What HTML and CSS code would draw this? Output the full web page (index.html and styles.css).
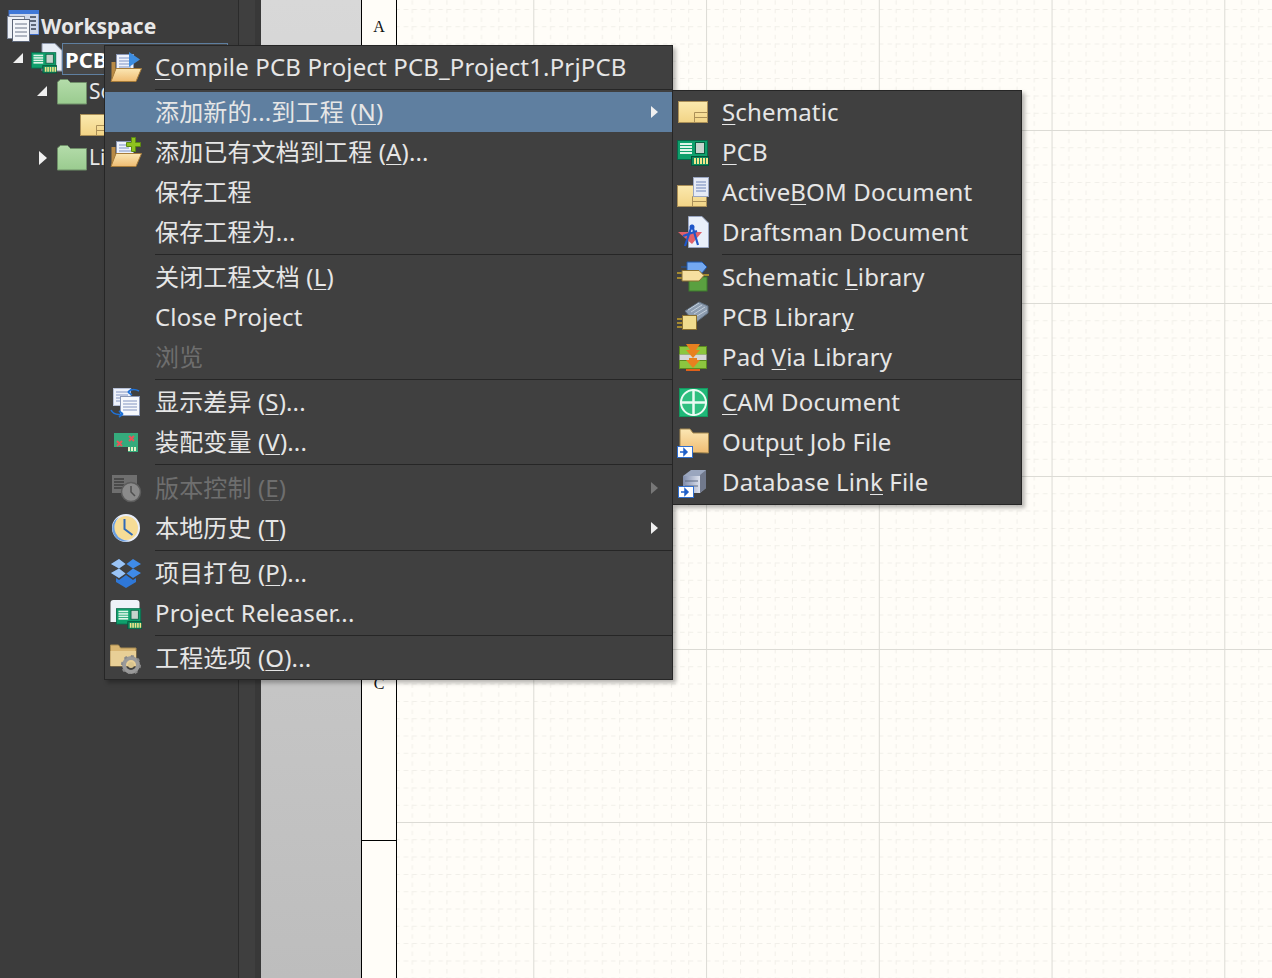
FILE: index.html
```html
<!DOCTYPE html>
<html lang="zh">
<head>
  <meta charset="UTF-8">
  <title>Workspace</title>
  <link rel="stylesheet" href="styles.css">
</head>
<body>
  <svg class="icon-defs" xmlns="http://www.w3.org/2000/svg">
    <defs>
      <linearGradient id="gFolder" x1="0" y1="0" x2="0" y2="1"><stop offset="0" stop-color="#fbe7b4"/><stop offset="1" stop-color="#efbc72"/></linearGradient>
      <linearGradient id="gSheet" x1="0" y1="0" x2="0" y2="1"><stop offset="0" stop-color="#fbe9ae"/><stop offset="1" stop-color="#f2d486"/></linearGradient>
      <linearGradient id="gGreen" x1="0" y1="0" x2="0" y2="1"><stop offset="0" stop-color="#b4dcaa"/><stop offset="1" stop-color="#9acb8f"/></linearGradient>
      <linearGradient id="gGrey" x1="0" y1="0" x2="1" y2="0"><stop offset="0" stop-color="#7f8cab"/><stop offset="1" stop-color="#dde2ee"/></linearGradient>
      <symbol id="i-pcb" viewBox="0 0 32 32">
        <rect x="0.500" y="4.500" width="30" height="19" fill="#0fa06c" stroke="#07694a"/>
        <rect x="3" y="7" width="12" height="2" fill="#dff5e8"/><rect x="3" y="10" width="12" height="2" fill="#dff5e8"/>
        <rect x="3" y="13" width="12" height="2" fill="#dff5e8"/><rect x="3" y="16" width="12" height="2" fill="#dff5e8"/>
        <rect x="18.500" y="6.500" width="9" height="11" fill="#c6d3cd" stroke="#0a5d42"/>
        <rect x="14.500" y="20.500" width="17" height="9" fill="#0e8a5e" stroke="#07503a"/>
        <path d="M18 22v6M21 22v6M24 22v6M27 22v6M30 22v6" stroke="#f0e58a" stroke-width="2"/>
      </symbol>
      <symbol id="i-sheet" viewBox="0 0 32 32">
        <rect x="1.500" y="5.500" width="29" height="21" fill="url(#gSheet)" stroke="#ab9058"/>
        <path d="M17.500 26V16.500H30M17.500 21.500H30" fill="none" stroke="#ab9058"/>
      </symbol>
      <symbol id="i-badge" viewBox="0 0 32 32">
        <rect x="0.500" y="20.500" width="15" height="11" fill="#fff" stroke="#2f6fd0"/>
        <path d="M3 26h6M7 23l3 3-3 3z" fill="#1f5fc8" stroke="#1f5fc8" stroke-width="1.500"/>
      </symbol>
    </defs>
  </svg>

  <div class="app">
    <aside class="tree-panel">
      <div class="tree-root">
        <svg class="tree-icon" viewBox="0 0 32 32">
          <rect x="2" y="0.500" width="30" height="24" fill="#cfd8ea" stroke="#3f6cc8"/>
          <rect x="2" y="0" width="30" height="4" fill="#3f78d8"/>
          <rect x="0.500" y="6.500" width="17" height="22" fill="#eef1f6" stroke="#7f8798"/>
          <rect x="5.500" y="9.500" width="17" height="22" fill="#f5f7fb" stroke="#5d6678"/>
          <path d="M8 14h12M8 18h12M8 22h12M8 26h12" stroke="#6b7488"/>
          <path d="M23 7h6M23 11h6M24 15h5M24 19h5" stroke="#5d6678" stroke-width="2"/>
        </svg>
        <span>Workspace</span>
      </div>

      <div class="tree-row level-0">
        <span class="arrow-open"></span>
        <svg class="tree-icon project-icon" viewBox="0 0 32 32">
          <path d="M11 0.500h13l7 7V28H11z" fill="#e8edf6" stroke="#8f99ad"/>
          <use href="#i-pcb" x="0" y="6" width="26" height="26"/>
        </svg>
        <span class="tree-label selected">PCB_Project1.PrjPCB</span>
      </div>
      <div class="tree-row level-1">
        <span class="arrow-open"></span>
        <svg class="tree-icon" viewBox="0 0 30 26"><path d="M0.500 25V3l3-2.500h7l3 3H29.500V25z" fill="url(#gGreen)" stroke="#6f8f69"/></svg>
        <span class="tree-label plain">Source Documents</span>
      </div>
      <div class="tree-row level-2">
        <svg class="tree-icon" viewBox="0 0 32 32"><use href="#i-sheet"/></svg>
        <span class="tree-label plain">Sheet1.SchDoc</span>
      </div>
      <div class="tree-row level-1">
        <span class="arrow-closed"></span>
        <svg class="tree-icon" viewBox="0 0 30 26"><path d="M0.500 25V3l3-2.500h7l3 3H29.500V25z" fill="url(#gGreen)" stroke="#6f8f69"/></svg>
        <span class="tree-label plain">Libraries</span>
      </div>
    </aside>
    <div class="panel-strip"></div>
    <div class="desk"></div>
    <div class="sheet-zones">
      <div class="zone zone-a">A</div>
      <div class="zone zone-b">B</div>
      <div class="zone zone-c">C</div>
    </div>
    <svg class="sheet-grid" xmlns="http://www.w3.org/2000/svg">
      <defs>
        <pattern id="grid" x="136.300" y="130" width="172.750" height="173" patternUnits="userSpaceOnUse">
          <g stroke="#f1efe9" stroke-dasharray="4.500 4.140" fill="none">
            <path d="M17.270 0V173M34.550 0V173M51.820 0V173M69.100 0V173M86.370 0V173M103.650 0V173M120.920 0V173M138.200 0V173M155.470 0V173"/>
            <path d="M0 17.800H173M0 35.100H173M0 52.400H173M0 69.700H173M0 87H173M0 104.300H173M0 121.600H173M0 138.900H173M0 156.200H173"/>
          </g>
          <path d="M0.500 0V173M0 0.500H173" stroke="#dcdbd5" fill="none"/>
        </pattern>
      </defs>
      <rect width="100%" height="100%" fill="url(#grid)"/>
    </svg>

    <div class="menu menu-main">
      <div class="menu-item">
        <svg class="menu-icon" viewBox="0 0 32 32">
          <path d="M1.500 29V11h4v18z" fill="#b98a45"/>
          <rect x="6.500" y="3.500" width="17" height="17" fill="#eef2fb" stroke="#8a97b5"/>
          <path d="M9 7h12M9 10h12M9 13h12M9 16h12" stroke="#7f93c4"/>
          <path d="M19 1v15l11-7.500z" fill="#3d8de0"/>
          <path d="M1 30.500 6 17.500H31.500L26 30.500z" fill="url(#gFolder)" stroke="#a77c3a"/>
        </svg>
        <span class="menu-text"><u>C</u>ompile PCB Project PCB_Project1.PrjPCB</span>
      </div>
      <div class="menu-sep"></div>
      <div class="menu-item active">
        <span class="menu-icon"></span>
        <span class="menu-text">添加新的...到工程 (<u>N</u>)</span>
        <span class="submenu-arrow"></span>
      </div>
      <div class="menu-item">
        <svg class="menu-icon" viewBox="0 0 32 32">
          <path d="M1.500 29V11h4v18z" fill="#b98a45"/>
          <rect x="6.500" y="5.500" width="17" height="15" fill="#eef2fb" stroke="#8a97b5"/>
          <path d="M9 9h10M9 12h10M9 15h12" stroke="#7f93c4"/>
          <path d="M1 30.500 6 17.500H31.500L26 30.500z" fill="url(#gFolder)" stroke="#a77c3a"/>
          <path d="M21.500 1.500h4v5h5v4h-5v5h-4v-5h-5v-4h5z" fill="#8fc31f" stroke="#5c8a12"/>
        </svg>
        <span class="menu-text">添加已有文档到工程 (<u>A</u>)...</span>
      </div>
      <div class="menu-item"><span class="menu-icon"></span><span class="menu-text">保存工程</span></div>
      <div class="menu-item"><span class="menu-icon"></span><span class="menu-text">保存工程为...</span></div>
      <div class="menu-sep"></div>
      <div class="menu-item"><span class="menu-icon"></span><span class="menu-text">关闭工程文档 (<u>L</u>)</span></div>
      <div class="menu-item"><span class="menu-icon"></span><span class="menu-text">Close Project</span></div>
      <div class="menu-item disabled"><span class="menu-icon"></span><span class="menu-text">浏览</span></div>
      <div class="menu-sep"></div>
      <div class="menu-item">
        <svg class="menu-icon" viewBox="0 0 32 32">
          <rect x="3.500" y="2.500" width="17" height="17" fill="#eef2fb" stroke="#b6c0d6"/>
          <path d="M6 6h12M6 9h12M6 12h12M6 15h12" stroke="#8294c0"/>
          <rect x="10.500" y="10.500" width="19" height="19" fill="#f6f8fc" stroke="#8a97b5"/>
          <path d="M13 15h14M13 18h14M13 21h14M13 24h14" stroke="#8294c0"/>
          <path d="M18 6c3-3 7-3 11-1M18 6l4-3M18 6l4 3" fill="none" stroke="#1f72d8" stroke-width="1.600"/>
          <path d="M1 24c2 4 7 5 12 4M13 28l-4-3M13 28l-4 3" fill="none" stroke="#1f72d8" stroke-width="1.600"/>
        </svg>
        <span class="menu-text">显示差异 (<u>S</u>)...</span>
      </div>
      <div class="menu-item">
        <svg class="menu-icon" viewBox="0 0 32 32">
          <path d="M4 7h24v19h-10v-5H4z" fill="#35ab7c"/>
          <path d="M7 15l5 5M12 15l-5 5M19 10l5 5M24 10l-5 5" stroke="#e8545a" stroke-width="2"/>
          <path d="M19 21v4M22 21v4M25 21v4" stroke="#e6f2c8" stroke-width="2"/>
        </svg>
        <span class="menu-text">装配变量 (<u>V</u>)...</span>
      </div>
      <div class="menu-sep tall"></div>
      <div class="menu-item disabled">
        <svg class="menu-icon" viewBox="0 0 32 32">
          <rect x="2" y="3" width="25" height="18" fill="#6f6f6f"/>
          <path d="M4 7h10M4 10h10M4 13h10M4 16h10" stroke="#4a4a4a" stroke-width="2"/>
          <circle cx="21" cy="20" r="9.500" fill="#8a8a8a" stroke="#5c5c5c" stroke-width="1.500"/>
          <path d="M21 14v6l4 4" fill="none" stroke="#4f4f4f" stroke-width="1.500"/>
        </svg>
        <span class="menu-text">版本控制 (<u>E</u>)</span>
        <span class="submenu-arrow"></span>
      </div>
      <div class="menu-item">
        <svg class="menu-icon" viewBox="0 0 32 32">
          <circle cx="16" cy="16" r="13" fill="#f6dc96" stroke="#e8eefa" stroke-width="2"/>
          <path d="M9 5a13 13 0 0 0 11 23.500A13.500 13.500 0 0 1 9 5z" fill="#6a9ee0"/>
          <path d="M14.500 7v10l8 6" fill="none" stroke="#2f6ab8" stroke-width="2"/>
        </svg>
        <span class="menu-text">本地历史 (<u>T</u>)</span>
        <span class="submenu-arrow"></span>
      </div>
      <div class="menu-sep"></div>
      <div class="menu-item">
        <svg class="menu-icon" viewBox="0 0 32 32">
          <path d="M9 2l6.500 5L9 11.500 1 7zM23 2l8 5-8 4.500L16.500 7zM9 11.500l6.500 5L9 21 1 16zM23 11.500l8 4.500-8 5-6.500-4.500z" fill="#3f8be8"/>
          <path d="M9 2 1 7l8 4.500L1 16l8 5 6.500-4.500L9 11.500l6.500-4.500z" fill="#e8f4ff" opacity="0.550"/>
          <path d="M16 18l7 5 3-2v4l-10 6-10-6v-4l3 2z" fill="#2f78d8"/>
        </svg>
        <span class="menu-text">项目打包 (<u>P</u>)...</span>
      </div>
      <div class="menu-item">
        <svg class="menu-icon" viewBox="0 0 32 32">
          <path d="M0.500 6q0-3 3-3h23q3 0 3 3v19H0.500z" fill="#eef2f8"/>
          <use href="#i-pcb" x="6" y="8" width="26" height="26"/>
        </svg>
        <span class="menu-text">Project Releaser...</span>
      </div>
      <div class="menu-sep"></div>
      <div class="menu-item">
        <svg class="menu-icon" viewBox="0 0 32 32">
          <path d="M0.500 24V3h8l2 3H26V24z" fill="#d9b672" stroke="#a78a50"/>
          <path d="M0.500 9H26V24H0.500z" fill="#e8cf96"/>
          <circle cx="21" cy="23" r="7" fill="none" stroke="#9a9a9a" stroke-width="4"/>
          <circle cx="21" cy="23" r="9" fill="none" stroke="#8a8a8a" stroke-width="2" stroke-dasharray="3 4"/>
          <circle cx="21" cy="23" r="3" fill="#d9c48e"/>
        </svg>
        <span class="menu-text">工程选项 (<u>O</u>)...</span>
      </div>
    </div>

    <div class="menu menu-sub">
      <div class="menu-item">
        <svg class="menu-icon" viewBox="0 0 32 32"><use href="#i-sheet"/></svg>
        <span class="menu-text"><u>S</u>chematic</span>
      </div>
      <div class="menu-item">
        <svg class="menu-icon" viewBox="0 0 32 32"><use href="#i-pcb"/></svg>
        <span class="menu-text"><u>P</u>CB</span>
      </div>
      <div class="menu-item">
        <svg class="menu-icon" viewBox="0 0 32 32">
          <rect x="0.500" y="9.500" width="29" height="21" fill="url(#gSheet)" stroke="#ab9058"/>
          <path d="M15.500 30V20.500H29.500M15.500 25.500H29.500" fill="none" stroke="#ab9058"/>
          <rect x="16.500" y="1.500" width="15" height="19" fill="#e6ebf6" stroke="#9aa6c2"/>
          <path d="M19 6h10M19 9h10M19 12h10M19 15h10" stroke="#6f85b8"/>
        </svg>
        <span class="menu-text">Active<u>B</u>OM Document</span>
      </div>
      <div class="menu-item">
        <svg class="menu-icon" viewBox="0 0 32 32">
          <path d="M11.500 0.500H25l6.500 6.500V31.500H11.500z" fill="#eaf0fa" stroke="#9aa6c2"/>
          <path d="M1 16h24L15 28z" fill="#e0606a"/>
          <path d="M15 9 8 30M15 9l6 20M6 20l14-5" fill="none" stroke="#1f56c8" stroke-width="2.200"/>
          <circle cx="15" cy="11" r="2.500" fill="#1f56c8"/>
        </svg>
        <span class="menu-text">Draftsman Document</span>
      </div>
      <div class="menu-sep"></div>
      <div class="menu-item">
        <svg class="menu-icon" viewBox="0 0 32 32">
          <path d="M4 6h6V1h15l5 5-5 6H10V6" fill="#74a8f0" stroke="#1f56a8"/>
          <rect x="12" y="16" width="18" height="14" fill="#5aa040" stroke="#3c7a2c"/>
          <path d="M0 12h5M0 17h5M26 14h6" stroke="#a58a30" stroke-width="2"/>
          <path d="M5 9.500h17l5 5-5 5.500H5z" fill="#f6dfa0" stroke="#8a7030"/>
        </svg>
        <span class="menu-text">Schematic <u>L</u>ibrary</span>
      </div>
      <div class="menu-item">
        <svg class="menu-icon" viewBox="0 0 32 32">
          <path d="M8 10 22 1l9 4v7L18 22z" fill="#8d9db0" stroke="#5f6f80"/>
          <path d="M11 9l11-7M14 11l11-7M17 13l11-7M20 15l10-6" stroke="#c4d0dc"/>
          <rect x="5.500" y="14.500" width="14" height="14" fill="#f0dc8e" stroke="#8a7030"/>
          <path d="M0 18h5M0 22h5M0 26h5" stroke="#a58a30" stroke-width="2"/>
        </svg>
        <span class="menu-text">PCB Librar<u>y</u></span>
      </div>
      <div class="menu-item">
        <svg class="menu-icon" viewBox="0 0 32 32">
          <rect x="2.500" y="5.500" width="27" height="8" fill="#8cc63f" stroke="#5c8a20"/>
          <rect x="2.500" y="13.500" width="27" height="6" fill="#d8d8d8"/>
          <rect x="2.500" y="19.500" width="27" height="8" fill="#8cc63f" stroke="#5c8a20"/>
          <path d="M9 3h14l-4 6h4l-7 8-7-8h4zM12 17h8v2h3l-7 8-7-8h3z" fill="#e8801f"/>
          <path d="M9 29h14" stroke="#e0601a" stroke-width="2"/>
        </svg>
        <span class="menu-text">Pad <u>V</u>ia Library</span>
      </div>
      <div class="menu-sep"></div>
      <div class="menu-item">
        <svg class="menu-icon" viewBox="0 0 32 32">
          <rect x="2.500" y="2.500" width="28" height="28" fill="#1fb878" stroke="#139a60"/>
          <circle cx="16.500" cy="16.500" r="12.500" fill="#2fbf80" stroke="#eafaf2" stroke-width="2"/>
          <path d="M16.500 3v27M3 16.500h27" stroke="#eafaf2" stroke-width="2.500"/>
        </svg>
        <span class="menu-text"><u>C</u>AM Document</span>
      </div>
      <div class="menu-item">
        <svg class="menu-icon" viewBox="0 0 32 32">
          <path d="M3 26V3h10l3 4h15.500v20z" fill="url(#gFolder)" stroke="#a78a50"/>
          <use href="#i-badge"/>
        </svg>
        <span class="menu-text">Outp<u>u</u>t Job File</span>
      </div>
      <div class="menu-item">
        <svg class="menu-icon" viewBox="0 0 32 32">
          <path d="M6 10l8-6h15v18l-6 5H6z" fill="#9aa6be"/>
          <path d="M23 27V9l6-5v18z" fill="#71798c"/>
          <path d="M6 10h17v17H6z" fill="url(#gGrey)"/>
          <path d="M8 15h13M8 20h13" stroke="#5f6a80"/>
          <use href="#i-badge" x="1"/>
        </svg>
        <span class="menu-text">Database Lin<u>k</u> File</span>
      </div>
    </div>
  </div>
</body>
</html>
```

FILE: styles.css
```css
html, body {
  margin: 0;
  height: 100%;
  overflow: hidden;
}

body {
  font-family: "Noto Sans", "Noto Sans CJK SC", sans-serif;
  background: #3c3c3c;
}

.icon-defs {
  display: block;
  width: 0;
  height: 0;
}

.app {
  display: flex;
  position: relative;
  height: 978px;
  width: 1272px;
  overflow: hidden;
}

/* left tree */
.tree-panel {
  width: 239px;
  padding: 9px 0 0 7px;
  box-sizing: border-box;
  background: #3c3c3c;
  border-right: 1px solid #2b2b2b;
  color: #e8e8e8;
  flex: none;
  overflow: hidden;
}

.tree-root {
  display: flex;
  align-items: center;
  height: 33px;
  gap: 2px;
  font-size: 21px;
  font-weight: 700;
  white-space: nowrap;
}

.tree-icon {
  width: 32px;
  height: 32px;
  flex: none;
}

.tree-row {
  display: flex;
  align-items: center;
  height: 33px;
  white-space: nowrap;
  font-size: 21px;
}

.level-0 {
  padding-left: 6px;
}

.level-1 {
  padding-left: 30px;
}

.level-1 .tree-icon {
  width: 30px;
  height: 26px;
  margin-left: 10px;
}

.level-2 {
  padding-left: 72px;
}

.arrow-open {
  width: 0;
  height: 0;
  border-left: 10px solid transparent;
  border-bottom: 10px solid #f0f0f0;
  flex: none;
  margin-bottom: 2px;
}

.arrow-closed {
  width: 0;
  height: 0;
  border-left: 8px solid #f0f0f0;
  border-top: 7px solid transparent;
  border-bottom: 7px solid transparent;
  margin-left: 2px;
  flex: none;
}

.project-icon {
  margin-left: 8px;
}

.tree-label {
  line-height: 31px;
}

.tree-label.selected {
  width: 166px;
  height: 32px;
  margin-left: -1px;
  padding-left: 2px;
  box-sizing: border-box;
  font-size: 22px;
  font-weight: 700;
  background: #474747;
  border: 1px solid #5f7fa0;
  color: #fff;
}

.tree-label.plain {
  margin-left: 2px;
}

/* strips between tree and sheet */
.panel-strip {
  width: 22px;
  flex: none;
  background: #3f3f3f;
  box-shadow: inset -6px 0 0 #383838;
}

.desk {
  width: 100px;
  flex: none;
  background: linear-gradient(#d8d8d8, #bdbdbd);
}

.sheet-zones {
  width: 34px;
  flex: none;
  background: #fffdf8;
  border-left: 1px solid #000;
  border-right: 1px solid #000;
  color: #111;
  font-family: "Liberation Serif", serif;
  font-size: 16px;
  text-align: center;
}

.zone {
  border-bottom: 1px solid #000;
  box-sizing: border-box;
}

.zone-a {
  height: 183px;
  padding-top: 18px;
}

.zone-b {
  height: 329px;
  padding-top: 155px;
}

.zone-c {
  height: 329px;
  padding-top: 163px;
}

.sheet-grid {
  flex: 1;
  height: 978px;
  display: block;
  background: #fffdf8;
}

/* context menus */
.menu {
  position: absolute;
  box-sizing: border-box;
  padding: 1px 0 2px;
  background: #404040;
  border: 1px solid #262626;
  box-shadow: 3px 3px 4px rgba(0, 0, 0, 0.28);
  color: #e6e6e6;
  font-size: 24px;
  letter-spacing: 0.15px;
}

.menu-main {
  left: 104px;
  top: 45px;
  width: 569px;
  padding-bottom: 1px;
  z-index: 1;
}

.menu-sub {
  left: 672px;
  top: 90px;
  width: 350px;
  z-index: 2;
}

.menu-item {
  display: flex;
  align-items: center;
  height: 40px;
  white-space: nowrap;
}

.menu-item.active {
  background: #5f7fa0;
}

.menu-item.disabled {
  color: #6e6e6e;
}

.menu-icon {
  width: 32px;
  height: 32px;
  flex: none;
  margin: 0 13px 0 5px;
}

.menu-sub .menu-icon {
  margin: 0 13px 0 4px;
}

.menu-text {
  line-height: 40px;
}

.menu-text u {
  text-underline-offset: 3px;
  text-decoration-thickness: 1px;
}

.menu-sep {
  height: 1px;
  margin: 2px 0 2px 50px;
  background: #262626;
}

.menu-sep.tall {
  margin-bottom: 3px;
}

.menu-sub .menu-sep {
  margin-left: 49px;
}

.submenu-arrow {
  width: 0;
  height: 0;
  margin-left: auto;
  margin-right: 14px;
  border-left: 7px solid #f0f0f0;
  border-top: 6px solid transparent;
  border-bottom: 6px solid transparent;
}

.menu-item.disabled .submenu-arrow {
  border-left-color: #777;
}
```
